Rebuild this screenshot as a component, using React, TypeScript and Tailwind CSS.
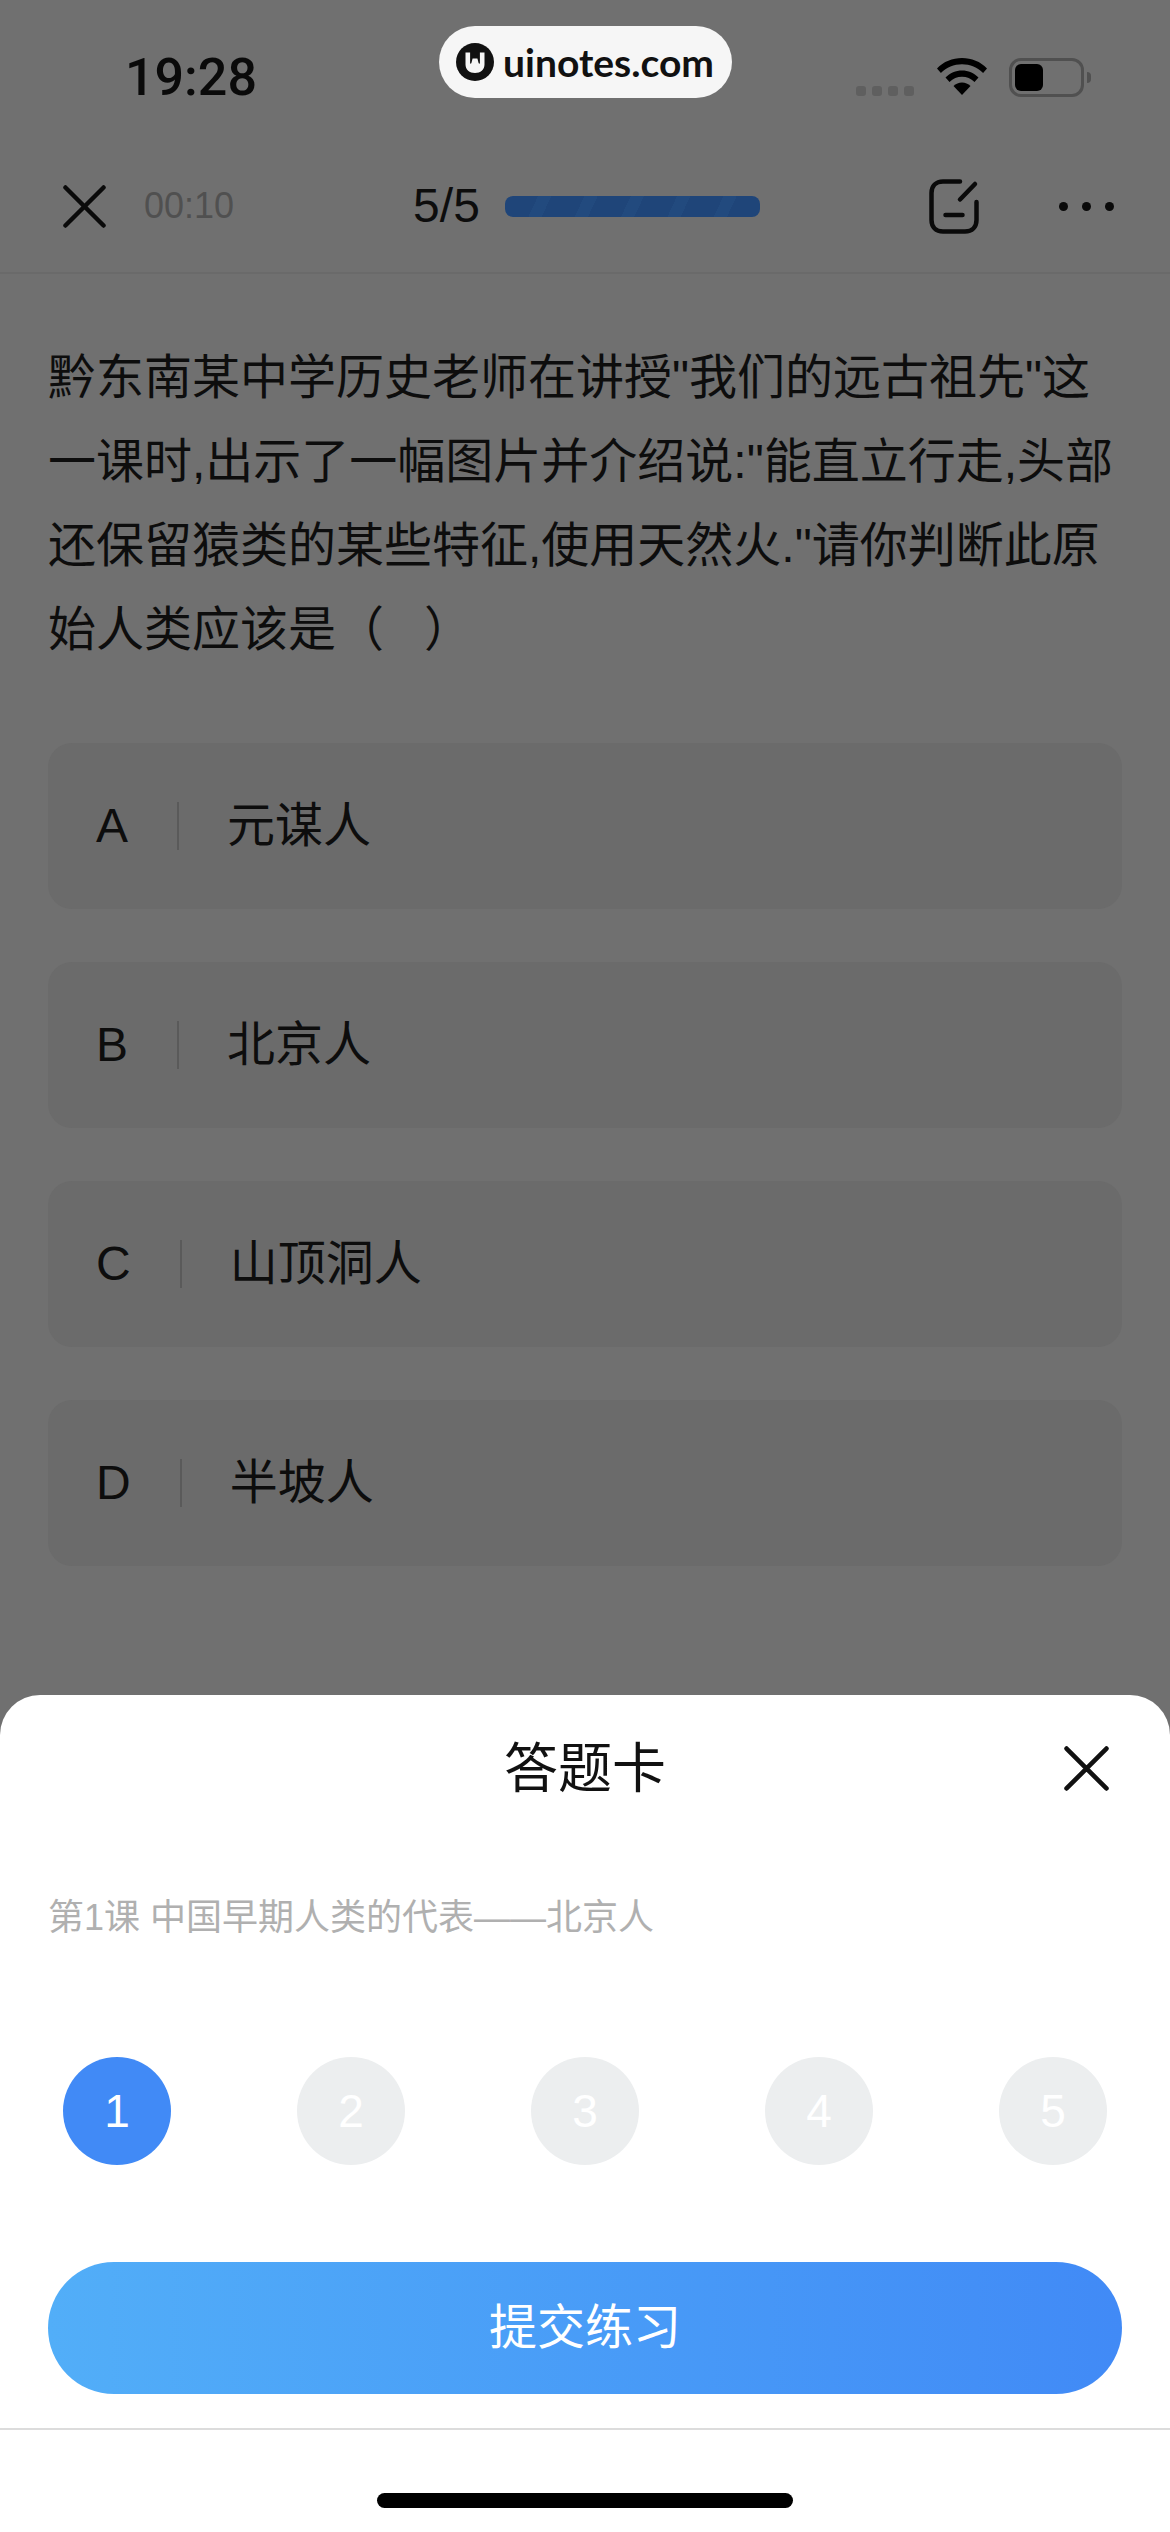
const FONT = "font-['Liberation_Sans','Noto_Sans_CJK_SC',sans-serif]"

const QUESTION_LINES = [
  '黔东南某中学历史老师在讲授"我们的远古祖先"这',
  '一课时,出示了一幅图片并介绍说:"能直立行走,头部',
  '还保留猿类的某些特征,使用天然火."请你判断此原',
  '始人类应该是（   ）',
]

const OPTIONS = [
  { letter: 'A', text: '元谋人' },
  { letter: 'B', text: '北京人' },
  { letter: 'C', text: '山顶洞人' },
  { letter: 'D', text: '半坡人' },
]

const CloseIcon = ({ className }: { className: string }) => (
  <svg viewBox="0 0 44 44" className={className} fill="none" stroke="currentColor" strokeWidth="4.5" strokeLinecap="round">
    <path d="M2.5 2.5 41.5 41.5M41.5 2.5 2.5 41.5" />
  </svg>
)

const Logo = () => (
  <svg viewBox="0 0 38 38" className="h-[38px] w-[38px] shrink-0">
    <circle cx="19" cy="19" r="19" fill="#111" />
    <path
      d="M9.5 9.5h4.6v10.5c0 .9 1 .9 1.3 0l1.2-4.5h4.8l1.2 4.5c.3.9 1.3.9 1.3 0V9.5h4.6v12c0 5-4 8.5-9.500 8.500s-9.500-3.500-9.500-8.500z"
      fill="#f6f6f6"
    />
  </svg>
)

const Wifi = () => (
  <svg viewBox="0 0 50 37" className="h-[37px] w-[50px]" fill="#000">
    <path d="M0 10.500C6.500 3.500 15.500 0 25 0s18.500 3.500 25 10.500l-3.900 4.500C40.500 9.300 33 6.200 25 6.200S9.500 9.300 3.900 15z" />
    <path d="M8.500 19.500C13 15 18.800 12.500 25 12.500s12 2.500 16.500 7l-4 4.500C34 20.600 29.700 18.800 25 18.800S16 20.600 12.500 24z" />
    <path d="M16.500 28C18.800 25.800 21.800 24.500 25 24.500s6.200 1.300 8.500 3.500L25 37z" />
  </svg>
)

const Battery = () => (
  <div className="flex items-center gap-[3px]">
    <div className="flex h-[39px] w-[75px] items-center rounded-[12px] border-[3px] border-[#505050] pl-[3px]">
      <div className="h-[27px] w-[28px] rounded-[6px] bg-black" />
    </div>
    <div className="h-[11px] w-[4px] rounded-r-full bg-[#505050]" />
  </div>
)

const StatusBar = () => (
  <div className="flex h-[140px] items-start justify-between pt-[48px] pl-[125px] pr-[79px]">
    <span className="font-['Roboto',sans-serif] text-[52px] leading-[60px] font-medium text-[#0a0a0a]">19:28</span>
    <div className="flex items-start pt-[10px]">
      <div className="mt-[28px] mr-[23px] flex gap-[6px]">
        {[0, 1, 2, 3].map((i) => (
          <div key={i} className="h-[10px] w-[10px] rounded-[3px] bg-[#5f5f5f]" />
        ))}
      </div>
      <div className="mr-[22px]">
        <Wifi />
      </div>
      <Battery />
    </div>
  </div>
)

const NavBar = () => (
  <div className="flex h-[134px] items-center border-b-2 border-[#6a6a6a] pr-[56px] pl-[63px]">
    <CloseIcon className="h-[43px] w-[43px] text-[#0a0a0a]" />
    <span className="ml-[38px] text-[36px] leading-none text-[#505050]">00:10</span>
    <span className="ml-[179px] text-[48px] leading-none text-[#0d0d0d]">5/5</span>
    <div className="ml-[25px] h-[21px] w-[255px] rounded-[8px] bg-[repeating-linear-gradient(115deg,#1f4579_0px,#1f4579_30px,#224a7e_30px,#224a7e_42px)]" />
    <svg viewBox="0 0 50 55" className="ml-[169px] h-[55px] w-[50px]" fill="none" stroke="#0a0a0a" strokeWidth="4.500" strokeLinecap="round">
      <path d="M31 2.500H14C7 2.500 2.500 7 2.500 14v27c0 7 4.500 11.500 11.500 11.500h22C43 52.500 47.500 48 47.500 41V23" />
      <path d="M31 20.500 46 5M16.500 36h17" />
    </svg>
    <div className="ml-[80px] flex gap-[14px]">
      {[0, 1, 2].map((i) => (
        <div key={i} className="h-[9px] w-[9px] rounded-full bg-[#0a0a0a]" />
      ))}
    </div>
  </div>
)

const OptionRow = ({ letter, text }: { letter: string; text: string }) => (
  <div className="flex h-[166px] items-center rounded-[24px] bg-[#6b6b6b] pl-[48px] text-[48px] leading-none text-[#0d0d0d]">
    <span>{letter}</span>
    <div className="mr-[48px] ml-[49px] h-[48px] w-[2px] bg-[#5a5a5a]" />
    <span>{text}</span>
  </div>
)

const AnswerSheet = () => (
  <div className="absolute right-0 bottom-0 left-0 flex h-[837px] flex-col rounded-t-[40px] bg-white">
    <div className="relative flex h-[148px] items-center justify-center">
      <span className="text-[54px] leading-none text-[#111]">答题卡</span>
      <CloseIcon className="absolute top-[51px] right-[61px] h-[45px] w-[45px] text-[#111]" />
    </div>
    <div className="mt-[55px] pl-[48px] text-[36px] leading-[40px] text-[#b0b0b0]">第1课 中国早期人类的代表——北京人</div>
    <div className="mt-[119px] flex justify-between px-[63px]">
      {[1, 2, 3, 4, 5].map((n) => (
        <div
          key={n}
          className={
            n === 1
              ? 'flex h-[108px] w-[108px] items-center justify-center rounded-full bg-[#418af6] text-[46px] leading-none text-white'
              : 'flex h-[108px] w-[108px] items-center justify-center rounded-full bg-[#eceeef] text-[46px] leading-none text-white'
          }
        >
          {n}
        </div>
      ))}
    </div>
    <div className="mt-[97px] px-[48px]">
      <div className="flex h-[132px] items-center justify-center rounded-full bg-linear-to-r from-[#52aef8] to-[#418af6] text-[48px] leading-none text-white">
        提交练习
      </div>
    </div>
    <div className="mt-[34px] h-[2px] bg-[#dcdcdc]" />
    <div className="mt-[63px] flex justify-center">
      <div className="h-[15px] w-[416px] rounded-full bg-black" />
    </div>
  </div>
)

export default function App() {
  return (
    <div className={`relative h-[2532px] w-[1170px] overflow-hidden bg-[#707070] ${FONT}`}>
      <StatusBar />
      <NavBar />
      <div className="px-[48px] pt-[62px] text-[48px] leading-[84px] whitespace-pre text-[#0d0d0d]">
        {QUESTION_LINES.map((line) => (
          <div key={line}>{line}</div>
        ))}
      </div>
      <div className="mt-[71px] flex flex-col gap-[53px] px-[48px]">
        {OPTIONS.map((o) => (
          <OptionRow key={o.letter} letter={o.letter} text={o.text} />
        ))}
      </div>

      <div className="absolute top-[26px] left-[439px] flex h-[72px] w-[293px] items-center rounded-full bg-[#f6f6f6] pl-[17px]">
        <Logo />
        <span className="ml-[9px] font-['Lato',sans-serif] text-[39px] leading-none font-bold text-[#111]">uinotes.com</span>
      </div>
      <AnswerSheet />
    </div>
  )
}
